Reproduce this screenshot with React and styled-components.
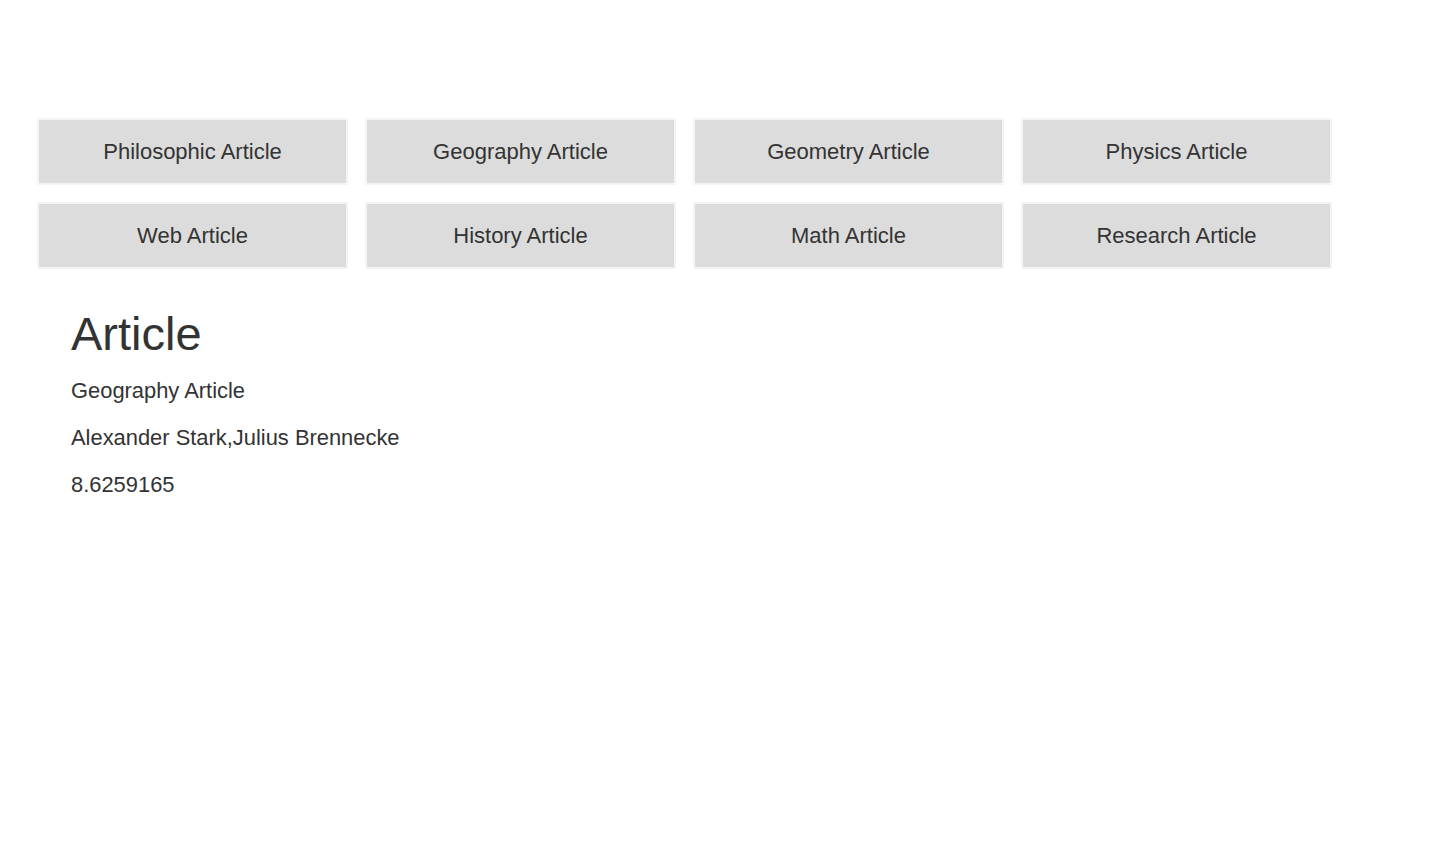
import React from 'react';
import styled, { createGlobalStyle } from 'styled-components';

const GlobalStyle = createGlobalStyle`
  body {
    margin: 0;
    background: #fff;
    font-family: "Liberation Sans", Arial, sans-serif;
    color: #333;
  }
`

const Page = styled.div`
  padding: 118px 37px 0 37px;
`

const Grid = styled.div`
  display: grid;
  grid-template-columns: repeat(4, 311px);
  column-gap: 17px;
  row-gap: 17px;
`

const Button = styled.button`
  height: 67px;
  box-sizing: border-box;
  border: 2px solid #f4f4f4;
  background-color: #dcdcdc;
  color: #333;
  font-family: "Liberation Sans", Arial, sans-serif;
  font-size: 22px;
  padding: 0;
  cursor: pointer;
`

const Article = styled.div`
  padding: 30px 34px 0 34px;
`

const Title = styled.h1`
  font-size: 47px;
  font-weight: normal;
  line-height: 54px;
  margin: 8px 0 16px 0;
`

const Line = styled.p`
  font-size: 21.9px;
  line-height: 27px;
  margin: 0 0 20px 0;
`

const articles = [
  'Philosophic Article',
  'Geography Article',
  'Geometry Article',
  'Physics Article',
  'Web Article',
  'History Article',
  'Math Article',
  'Research Article',
];

function App() {
  return (
    <>
      <GlobalStyle />
      <Page>
        <Grid>
          {articles.map(name => (
            <Button key={name}>{name}</Button>
          ))}
        </Grid>
        <Article>
          <Title>Article</Title>
          <Line>Geography Article</Line>
          <Line>Alexander Stark,Julius Brennecke</Line>
          <Line>8.6259165</Line>
        </Article>
      </Page>
    </>
  );
}

export default App;
